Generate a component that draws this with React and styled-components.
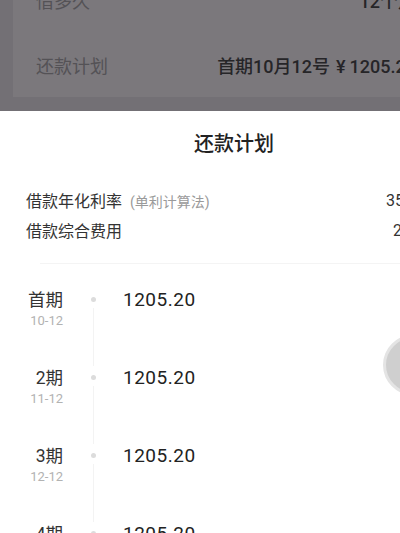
import React from "react";
import styled, { createGlobalStyle } from "styled-components";

const GlobalStyle = createGlobalStyle`
  html, body {
    margin: 0;
    padding: 0;
    width: 400px;
    height: 533px;
    overflow: hidden;
    background: #ffffff;
    font-family: Roboto, "Noto Sans CJK SC", "Noto Sans", sans-serif;
  }
`;

const Page = styled.div`
  width: 468px;
  height: 533px;
  display: flex;
  flex-direction: column;
  position: relative;
  overflow: hidden;
`;

const Backdrop = styled.div`
  height: 111px;
  flex: none;
  background: #737075;
  padding: 0 0 14px 13px;
  box-sizing: border-box;
  display: flex;
  flex-direction: column;
  justify-content: flex-end;
  overflow: hidden;
`;

const Card = styled.div`
  background: #7b787c;
  padding: 0 52px 0 23px;
  flex: none;
`;

const CardRow = styled.div`
  height: 65px;
  display: flex;
  align-items: center;
  justify-content: space-between;
  font-size: 18px;
`;

const CardLabel = styled.span`
  color: #545256;
`;

const CardValue = styled.span`
  color: #262528;
  font-weight: 500;
  white-space: nowrap;
`;

const Yen = styled.span`
  margin: 0 4px 0 6px;
`;

const Sheet = styled.div`
  flex: 1;
  background: #ffffff;
  display: flex;
  flex-direction: column;
`;

const Title = styled.div`
  margin-top: 19px;
  height: 28px;
  line-height: 28px;
  text-align: center;
  font-size: 20px;
  font-weight: 500;
  color: #222222;
`;

const Info = styled.div`
  padding: 27px 39px 0 26px;
`;

const InfoRow = styled.div`
  height: 30px;
  display: flex;
  align-items: center;
  justify-content: space-between;
  font-size: 16px;
  color: #333333;
`;

const Hint = styled.span`
  margin-left: 8px;
  font-size: 14px;
  color: #9a9a9a;
`;

const Divider = styled.div`
  margin: 18px 0 0 40px;
  height: 1px;
  background: #f4f4f4;
`;

const Timeline = styled.div`
  padding-top: 24px;
`;

const Step = styled.div`
  height: 78px;
  display: flex;
`;

const Period = styled.div`
  width: 63px;
  text-align: right;
  display: flex;
  flex-direction: column;
`;

const PeriodName = styled.span`
  font-size: 17.5px;
  line-height: 24px;
  color: #333333;
`;

const PeriodDate = styled.span`
  font-size: 13px;
  line-height: 18px;
  color: #b2b2b2;
`;

const Rail = styled.div`
  width: 60px;
  display: flex;
  flex-direction: column;
  align-items: center;
`;

const Dot = styled.span`
  width: 5px;
  height: 5px;
  margin-top: 9px;
  border-radius: 50%;
  background: #dcdcdc;
`;

const Line = styled.span`
  flex: 1;
  width: 1px;
  margin-top: 6px;
  background: #f3f3f3;
`;

const Amount = styled.span`
  font-size: 19px;
  line-height: 24px;
  letter-spacing: 0.5px;
  color: #222222;
`;

const FloatButton = styled.div`
  position: absolute;
  left: 383px;
  top: 335px;
  width: 60px;
  height: 60px;
  border-radius: 50%;
  box-sizing: border-box;
  background: #cfcfcf;
  border: 3px solid #e4e4e4;
`;

const steps = [
  { name: "首期", date: "10-12", amount: "1205.20" },
  { name: "2期", date: "11-12", amount: "1205.20" },
  { name: "3期", date: "12-12", amount: "1205.20" },
  { name: "4期", date: "01-12", amount: "1205.20" },
];

export default function App() {
  return (
    <>
      <GlobalStyle />
      <Page>
        <Backdrop>
          <Card>
            <CardRow>
              <CardLabel>借多久</CardLabel>
              <CardValue>12个月</CardValue>
            </CardRow>
            <CardRow>
              <CardLabel>还款计划</CardLabel>
              <CardValue>
                首期10月12号<Yen>¥</Yen>1205.20
              </CardValue>
            </CardRow>
          </Card>
        </Backdrop>
        <Sheet>
          <Title>还款计划</Title>
          <Info>
            <InfoRow>
              <span>
                借款年化利率<Hint>(单利计算法)</Hint>
              </span>
              <span>35.9%</span>
            </InfoRow>
            <InfoRow>
              <span>借款综合费用</span>
              <span>2460</span>
            </InfoRow>
          </Info>
          <Divider />
          <Timeline>
            {steps.map((s) => (
              <Step key={s.name}>
                <Period>
                  <PeriodName>{s.name}</PeriodName>
                  <PeriodDate>{s.date}</PeriodDate>
                </Period>
                <Rail>
                  <Dot />
                  <Line />
                </Rail>
                <Amount>{s.amount}</Amount>
              </Step>
            ))}
          </Timeline>
        </Sheet>
        <FloatButton />
      </Page>
    </>
  );
}
